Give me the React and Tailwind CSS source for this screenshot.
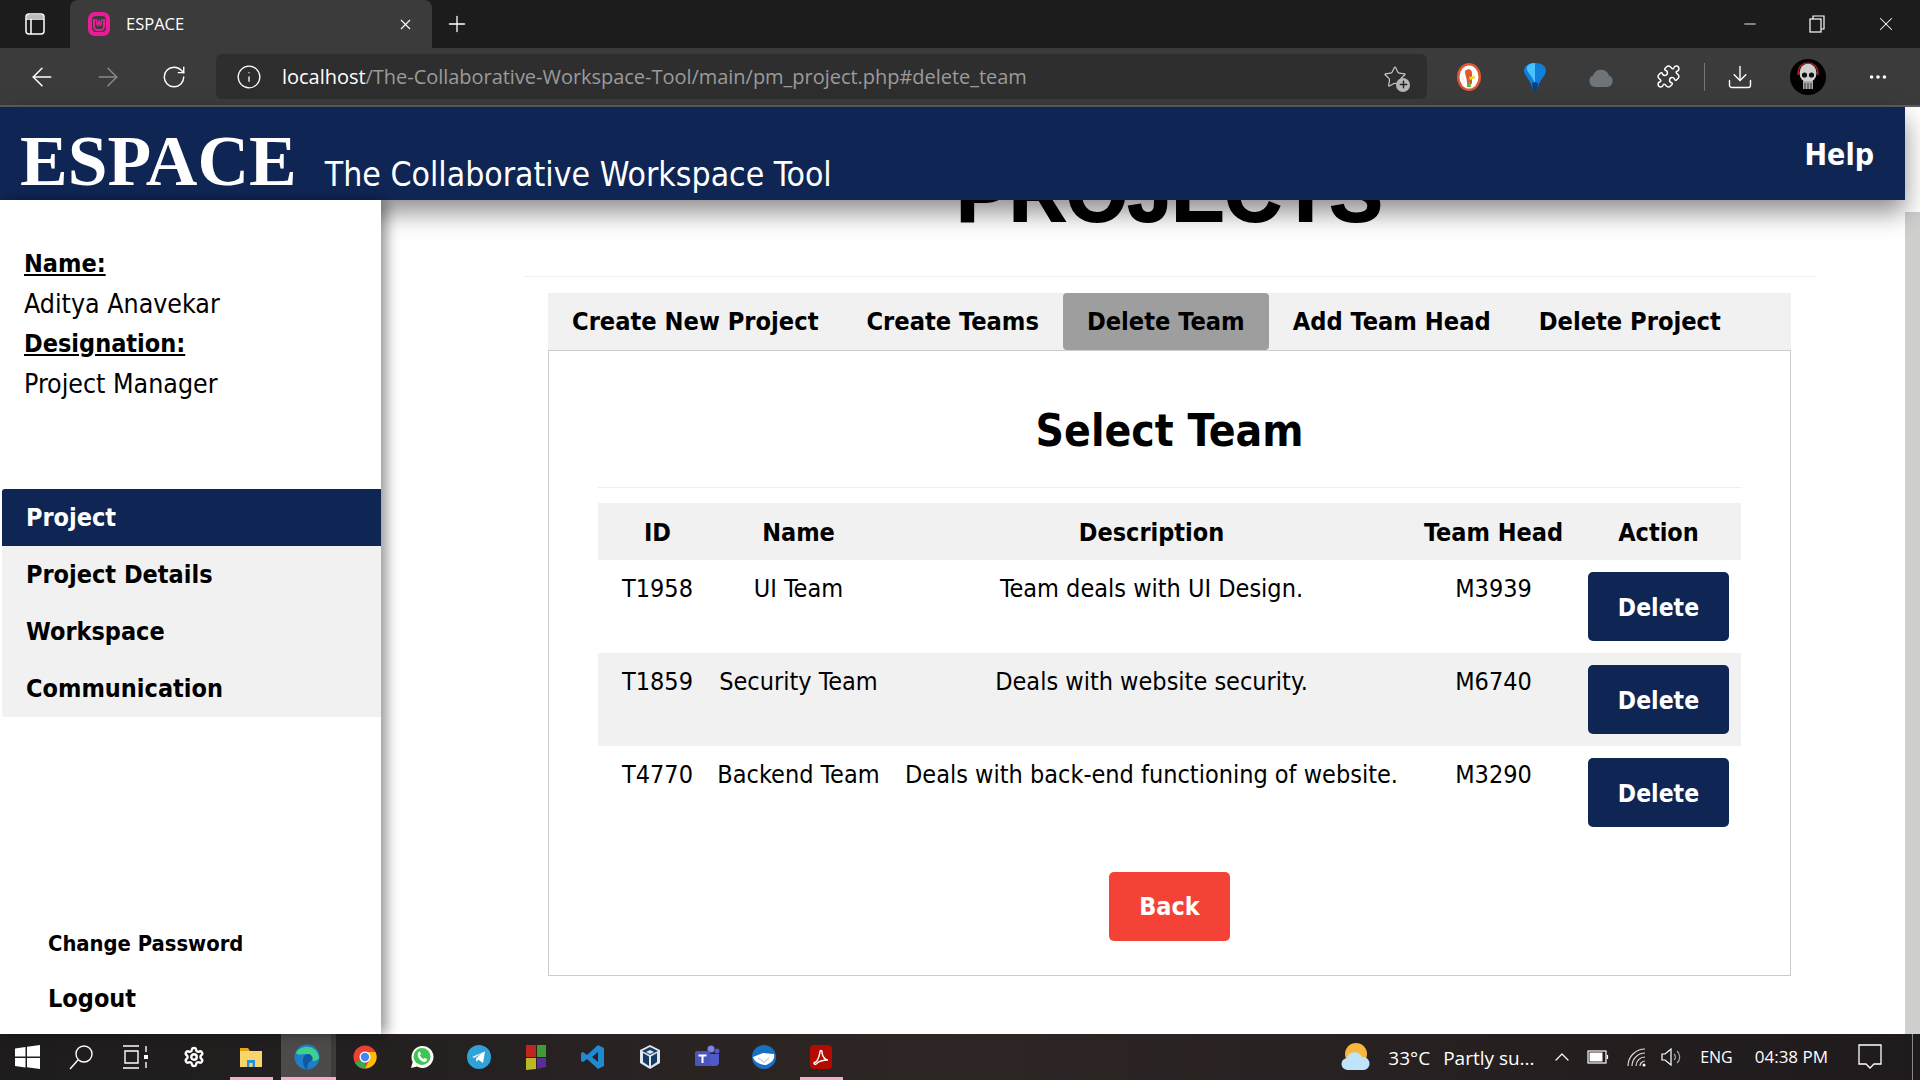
import { ArrowLeft, ArrowRight, RotateCw, Info, Star, Download, MoreHorizontal, Plus, X, Minus, Settings, ChevronUp, Puzzle } from 'lucide-react';

const font = "font-['DejaVu_Sans_Condensed','DejaVu_Sans',sans-serif]";
const uiFont = "font-['Open_Sans','Noto_Sans',sans-serif]";

const teams = [
  { id: 'T1958', name: 'UI Team', desc: 'Team deals with UI Design.', head: 'M3939' },
  { id: 'T1859', name: 'Security Team', desc: 'Deals with website security.', head: 'M6740' },
  { id: 'T4770', name: 'Backend Team', desc: 'Deals with back-end functioning of website.', head: 'M3290' },
];

const tabs = ['Create New Project', 'Create Teams', 'Delete Team', 'Add Team Head', 'Delete Project'];
const navItems = ['Project', 'Project Details', 'Workspace', 'Communication'];

// Browser chrome: tab strip
const TabBar = () => (
  <div className={`flex h-[48px] bg-[#1c1c1c] text-white ${uiFont}`}>
    <div className="flex w-[70px] items-center justify-center">
      <svg width="22" height="24" viewBox="0 0 22 24" fill="none" stroke="white" strokeWidth="1.5">
        <rect x="2" y="2" width="18" height="20" rx="3" />
        <path d="M2 7h18M7 7v15" />
        <path d="M3 3h16v4H3z" fill="#bbb" stroke="none" />
      </svg>
    </div>
    <div className="flex w-[362px] items-center rounded-t-lg bg-[#3b3b3b] pl-[17px] pr-[18px]">
      <svg width="24" height="26" viewBox="0 0 24 26">
        <rect x="1" y="1" width="22" height="24" rx="7" fill="#ec1c97" />
        <rect x="5" y="5" width="14" height="16" rx="4" fill="#3b3b3b" />
        <path d="M7 8v7c0 3 2 4 3 4h4c1 0 3-1 3-4V8" fill="none" stroke="#ec1c97" strokeWidth="2" />
        <path d="M9 8l1.500 7L12 10l1.500 5L15 8" fill="none" stroke="#ec1c97" strokeWidth="1.500" />
      </svg>
      <span className="ml-[15px] flex-1 text-[16.5px]">ESPACE</span>
      <X size={17} strokeWidth={1.5} />
    </div>
    <div className="flex w-[50px] items-center justify-center">
      <Plus size={26} strokeWidth={1.2} />
    </div>
    <div className="flex-1" />
    <div className="flex w-[68px] items-center justify-center">
      <Minus size={18} strokeWidth={1.2} />
    </div>
    <div className="flex w-[68px] items-center justify-center pr-[2px]">
      <svg width="16" height="18" viewBox="0 0 16 18" fill="none" stroke="white" strokeWidth="1.2">
        <rect x="1" y="4" width="11" height="13" />
        <path d="M4 4V1h11v13h-3" />
      </svg>
    </div>
    <div className="flex w-[68px] items-center justify-center">
      <X size={22} strokeWidth={1.1} />
    </div>
  </div>
);

// Browser chrome: address bar
const Toolbar = () => (
  <div className={`flex h-[59px] items-start border-b-2 border-[#5c5c5c] bg-[#3b3b3b] pt-[6px] text-white ${uiFont}`}>
    <div className="flex h-[45px] w-[216px] items-center pl-[26px]">
      <ArrowLeft size={30} strokeWidth={1.2} className="w-[32px]" />
      <ArrowRight size={30} strokeWidth={1.2} className="ml-[34px] w-[32px] text-[#8a8a8a]" />
      <RotateCw size={26} strokeWidth={1.3} className="ml-[37px]" />
    </div>
    <div className="flex h-[45px] w-[1211px] items-center rounded-md bg-[#2e2e2e] pl-[20px] pr-[20px]">
      <Info size={26} strokeWidth={1.2} />
      <span className="ml-[20px] flex-1 text-[20px] tracking-[-0.03px]">
        localhost<span className="text-[#9b9b9b]">/The-Collaborative-Workspace-Tool/main/pm_project.php#delete_team</span>
      </span>
      <span className="relative">
        <Star size={24} strokeWidth={1.2} className="text-[#c8c8c8]" />
        <span className="absolute -bottom-[3px] -right-[3px] flex h-[14px] w-[14px] items-center justify-center rounded-full bg-[#b5b5b5] text-[#222]">
          <Plus size={11} strokeWidth={3} />
        </span>
      </span>
    </div>
    <div className="flex h-[45px] flex-1 items-center">
      <div className="flex w-[55px] justify-end">
        <svg width="26" height="30" viewBox="0 0 26 30">
          <ellipse cx="13" cy="15" rx="12" ry="14" fill="#de5833" />
          <ellipse cx="13" cy="15" rx="9.500" ry="11.500" fill="white" />
          <path d="M9 9c3-3 7-2 7 2v10c0 2-5 2-5 0 0-5-2-7-2-12z" fill="#de5833" />
          <path d="M13 15l6-1v2l-5 2z" fill="#fdd209" />
          <path d="M11 21l3-1 1 5h-4z" fill="#4cba3c" />
        </svg>
      </div>
      <div className="flex w-[65px] justify-end">
        <svg width="24" height="30" viewBox="0 0 24 30">
          <path d="M12 1c7 0 11 3 11 8 0 5-7 8-9 20h-4C8 17 1 14 1 9c0-5 4-8 11-8z" fill="#0f7fd9" />
          <path d="M12 1c-6 0-9 3-8 7 1 3 5 5 8 14z" fill="#4cc1ff" />
          <path d="M10 29h4l1-8-3-1-3 1z" fill="#0a3f78" />
        </svg>
      </div>
      <div className="flex w-[67px] justify-end">
        <svg width="26" height="22" viewBox="0 0 26 22">
          <path d="M7 21a6 6 0 0 1-2-11.500A8.500 8.500 0 0 1 21 9.500 6 6 0 0 1 19 21z" fill="#6f7478" />
        </svg>
      </div>
      <div className="flex w-[67px] justify-end">
        <Puzzle size={25} strokeWidth={1.4} />
      </div>
      <div className="ml-[23px] h-[28px] w-px bg-[#777]" />
      <div className="flex w-[49px] justify-end">
        <Download size={28} strokeWidth={1.2} />
      </div>
      <div className="ml-[36px] flex h-[36px] w-[36px] items-center justify-center rounded-full bg-black">
        <svg width="26" height="30" viewBox="0 0 26 30">
          <ellipse cx="13" cy="11" rx="8.500" ry="9.500" fill="#cfcfcf" />
          <circle cx="9.500" cy="13" r="2.600" fill="#111" />
          <circle cx="16.500" cy="13" r="2.600" fill="#111" />
          <path d="M8 19h10v8H8z" fill="#a8a8a8" />
          <path d="M10 21v6M13 21v6M16 21v6" stroke="#333" />
          <path d="M3 13C3 4 8 1 13 1s10 3 10 12" fill="none" stroke="#a22" strokeWidth="1.500" />
        </svg>
      </div>
      <div className="ml-[41px]">
        <MoreHorizontal size={22} strokeWidth={2} />
      </div>
    </div>
  </div>
);

const Header = () => (
  <header className={`relative z-10 flex h-[93px] items-start bg-[#0f2654] text-white shadow-[0_12px_24px_rgba(0,0,0,0.45)] ${font}`}>
    <span className="ml-[20px] mt-[14px] font-['Liberation_Serif',serif] text-[71.5px] font-bold leading-[80px]">ESPACE</span>
    <span className="ml-[28px] mt-[48px] text-[33.5px] leading-[40px]">The Collaborative Workspace Tool</span>
    <span className="ml-auto mr-[31px] mt-[28px] text-[30px] font-bold leading-[40px]">Help</span>
  </header>
);

const Sidebar = () => (
  <aside className={`relative z-20 flex w-[381px] flex-col bg-white pt-[44px] text-black shadow-[6px_0_12px_rgba(0,0,0,0.4)] ${font}`}>
    <div className="pl-[24px] text-[26.5px] leading-[40px]">
      <p className="text-[25px] font-bold underline">Name:</p>
      <p>Aditya Anavekar</p>
      <p className="text-[25px] font-bold underline">Designation:</p>
      <p>Project Manager</p>
    </div>
    <nav className="ml-[2px] mt-[85px] overflow-hidden rounded-l-[3px] bg-[#f1f1f1]">
      {navItems.map((item, i) => (
        <div
          key={item}
          className={`flex h-[57px] items-center pl-[24px] text-[25px] font-bold ${i === 0 ? 'bg-[#0f2654] text-white' : ''}`}
        >
          {item}
        </div>
      ))}
    </nav>
    <div className="mt-auto pb-[15px] pl-[48px] font-bold">
      <p className="text-[21.8px] leading-[40px]">Change Password</p>
      <p className="mt-[15px] text-[25px] leading-[40px]">Logout</p>
    </div>
  </aside>
);

const TeamTable = () => (
  <table className="mt-[15px] w-full table-fixed border-collapse text-center text-[25px] leading-[33px]">
    <thead>
      <tr className="bg-[#f1f1f1] font-bold">
        <th className="w-[107px] pb-[11px] pl-[24px] pr-[12px] pt-[13px]">ID</th>
        <th className="w-[187px] px-[12px] pb-[11px] pt-[13px]">Name</th>
        <th className="px-[12px] pb-[11px] pt-[13px]">Description</th>
        <th className="w-[165px] px-[12px] pb-[11px] pt-[13px]">Team Head</th>
        <th className="w-[165px] px-[12px] pb-[11px] pt-[13px]">Action</th>
      </tr>
    </thead>
    <tbody>
      {teams.map((t, i) => (
        <tr key={t.id} className={i === 1 ? 'bg-[#f1f1f1]' : ''}>
          <td className="py-[12px] pl-[24px] pr-[12px] align-top">{t.id}</td>
          <td className="p-[12px] align-top">{t.name}</td>
          <td className="p-[12px] align-top">{t.desc}</td>
          <td className="p-[12px] align-top">{t.head}</td>
          <td className="p-[12px] align-top">
            <button className="h-[69px] w-[141px] rounded-[5px] bg-[#0f2654] pt-[1px] text-[24.5px] font-bold text-white">Delete</button>
          </td>
        </tr>
      ))}
    </tbody>
  </table>
);

const Main = () => (
  <main className={`min-w-0 flex-1 overflow-hidden bg-white text-black ${font}`}>
    <div className="ml-[143px] w-[1291px]">
      <div className="flex h-[76px] items-end justify-center">
        <h1 className="mb-[43px] font-['Liberation_Sans',sans-serif] text-[79px] font-bold leading-none [-webkit-text-stroke:2px_black]">PROJECTS</h1>
      </div>
      <hr className="border-[#eeeeee]" />
      <div className="mx-[24px] mt-[16px]">
        <div className="flex h-[57px] bg-[#f1f1f1] text-[25.2px] font-bold">
          {tabs.map((tab) => (
            <div key={tab} className={`flex items-center px-[24px] ${tab === 'Delete Team' ? 'rounded-[4px] bg-[#9e9e9e]' : ''}`}>
              {tab}
            </div>
          ))}
        </div>
        <div className="h-[626px] border border-[#cccccc] px-[49px]">
          <h2 className="flex h-[136px] items-center justify-center pt-[23px] text-[44px] font-bold">Select Team</h2>
          <hr className="border-[#eeeeee]" />
          <TeamTable />
          <div className="mt-[33px] flex justify-center">
            <button className="h-[69px] w-[121px] rounded-[5px] bg-[#f44336] text-[25px] font-bold text-white">Back</button>
          </div>
        </div>
      </div>
    </div>
  </main>
);

// Windows taskbar icons
const taskIcons = [
  <svg key="chrome" width="24" height="24" viewBox="0 0 24 24">
    <circle cx="12" cy="12" r="11.500" fill="#ea4335" />
    <path d="M12 12L2 18a11.500 11.500 0 0 0 10 5.500z" fill="#34a853" />
    <path d="M12 7h10.500a11.500 11.500 0 0 1-10.500 16.500L17 14z" fill="#fbbc05" />
    <circle cx="12" cy="12" r="5.500" fill="white" />
    <circle cx="12" cy="12" r="4.200" fill="#4285f4" />
  </svg>,
  <svg key="whatsapp" width="24" height="24" viewBox="0 0 24 24">
    <path d="M1 23l1.700-6A11 11 0 1 1 7 21.500z" fill="white" />
    <circle cx="12" cy="11.500" r="8.500" fill="#3fc456" />
    <path d="M8.500 7c1-1 1.500-.5 2 1l.5 1-1 1.500c.8 1.500 2 2.700 3.500 3.500l1.500-1 2 1c.5 1.500-1 3-2.500 3C10.500 17 6 11 8.500 7z" fill="white" />
  </svg>,
  <svg key="telegram" width="24" height="24" viewBox="0 0 24 24">
    <circle cx="12" cy="12" r="12" fill="#2fa3d9" />
    <path d="M5 12l13-5.500-2 11.500-4.500-3.200-2 2-.5-3.500 6-5.300-7.500 4.800z" fill="white" />
  </svg>,
  <svg key="tiles" width="24" height="26" viewBox="0 0 24 26">
    <path d="M2 1h10v12H2z" fill="#c0261f" />
    <path d="M13 1h9v12h-9z" fill="#3f9c35" />
    <path d="M2 14h10v11l-10 1z" fill="#b9b827" />
    <path d="M13 14h9v9l-9 2z" fill="#5b2a9b" />
  </svg>,
  <svg key="vscode" width="24" height="26" viewBox="0 0 24 26">
    <path d="M17 1l6 3v18l-6 3L6 15l-4 3-2-1v-8l2-1 4 3zM17 8l-6 5 6 5z" fill="#1f8ad2" />
  </svg>,
  <svg key="box" width="22" height="26" viewBox="0 0 22 26">
    <path d="M11 1l10 5v13l-10 6-10-6V6z" fill="#dfe6f0" />
    <path d="M11 3l8 4-8 4-8-4zM4 9l6 3.500V22l-6-4zM18 9l-6 3.500V22l6-4z" fill="#173a63" />
    <path d="M11 6l4 2-4 2-4-2z" fill="#dfe6f0" />
  </svg>,
  <svg key="teams" width="26" height="26" viewBox="0 0 26 26">
    <circle cx="17" cy="5" r="3.500" fill="#7b83eb" />
    <circle cx="23" cy="7" r="2.500" fill="#5059c9" />
    <path d="M14 10h11v8a4 4 0 0 1-4 4h-3a4 4 0 0 1-4-4z" fill="#5059c9" />
    <rect x="1" y="7" width="15" height="15" rx="1.500" fill="#4b53bc" />
    <path d="M4.500 10.500h8v2h-3V19h-2v-6.500h-3z" fill="white" />
  </svg>,
  <svg key="thunderbird" width="24" height="26" viewBox="0 0 24 26">
    <circle cx="12" cy="13" r="12" fill="#1b6fc2" />
    <path d="M1 13l10-4 11 1c1 5-2 9-8 11-5 0-12-3-13-8z" fill="white" />
    <path d="M6 14l6 4 5-4" fill="none" stroke="#c9d4e6" strokeWidth="1.500" />
  </svg>,
  <svg key="acrobat" width="22" height="24" viewBox="0 0 22 24">
    <rect x="0" y="0" width="22" height="24" rx="4" fill="#b30b00" />
    <path d="M4 18c3-1 5-5 6-11 0-2 2-2 2 0 0 4 3 8 6 8-4 0-9 1-12 4-1 1-2 0-2-1z" fill="none" stroke="white" strokeWidth="1.500" />
  </svg>,
];

const Taskbar = () => (
  <div className={`flex h-[46px] items-center bg-gradient-to-r from-[#1e1c1d] via-[#2e2625] to-[#1f1a1c] text-white ${uiFont}`}>
    <div className="flex w-[54px] justify-center">
      <svg width="25" height="24" viewBox="0 0 25 24" fill="white">
        <path d="M0 3.500l10.500-1.500v9.500H0zM12 1.800L25 0v11.500H12zM0 13h10.500v9.500L0 21zM12 13h13v11l-13-1.800z" />
      </svg>
    </div>
    <div className="flex w-[54px] justify-center">
      <svg width="24" height="25" viewBox="0 0 24 25" fill="none" stroke="white" strokeWidth="1.400">
        <circle cx="15" cy="9" r="8" />
        <path d="M9 15L1 24" />
      </svg>
    </div>
    <div className="flex w-[54px] justify-center">
      <svg width="26" height="24" viewBox="0 0 26 24" fill="none" stroke="white" strokeWidth="1.400">
        <path d="M1 1h16M1 23h16M3 6h13v12H3zM24 1v6M24 17v6" />
        <rect x="22" y="10" width="4" height="4" fill="white" stroke="none" />
      </svg>
    </div>
    <div className="flex w-[64px] justify-center">
      <Settings size={22} strokeWidth={2.6} />
    </div>
    <div className="relative flex h-full w-[50px] items-center justify-center">
      <svg width="24" height="24" viewBox="0 0 24 24">
        <path d="M1 3h8l2 3H1z" fill="#e8a416" />
        <path d="M1 6h22v16H1z" fill="#f7d56a" />
        <path d="M8 22v-7h8v7h-2.500v-4h-3v4z" fill="#2a8ee0" />
      </svg>
      <span className="absolute bottom-0 left-[4px] h-[3px] w-[43px] bg-[#f4adc6]" />
    </div>
    <div className="relative ml-[5px] flex h-full w-[55px]">
      <div className="flex w-[50px] items-center justify-center bg-[#4d4a49] pl-[1px]">
        <svg width="26" height="26" viewBox="0 0 26 26">
          <circle cx="13" cy="13" r="12.500" fill="#1e7fc8" />
          <path d="M2 9C5 1 22-1 25 13c0 3-3 4-7 4 2-2 1-7-5-7-5 0-9 2-11-1z" fill="#3fcf8e" />
          <path d="M9 16c0-4 3-6 6-6 3 1 4 5 2 7-2 1-5 4-3 8-4 0-5-5-5-9z" fill="#0c59a4" />
        </svg>
      </div>
      <div className="w-[5px] bg-[#3e3b3a]" />
      <span className="absolute bottom-0 left-0 h-[3px] w-full bg-[#f4adc6]" />
    </div>
    {taskIcons.map((icon, i) => (
      <div key={i} className="relative flex h-full w-[57px] items-center justify-center">
        {icon}
        {i === 8 && <span className="absolute bottom-0 left-[8px] h-[3px] w-[43px] bg-[#f4adc6]" />}
      </div>
    ))}
    <div className="flex-1" />
    <svg width="30" height="30" viewBox="0 0 30 30">
      <circle cx="15" cy="12" r="11" fill="#f6b73c" />
      <path d="M7 28a6 6 0 0 1-1-12 8 8 0 0 1 15-1 6.500 6.500 0 0 1 2 13z" fill="#bfe3f7" />
    </svg>
    <span className="ml-[17px] mt-[3px] text-[19px]">33°C</span>
    <span className="ml-[13px] mt-[3px] w-[93px] whitespace-nowrap text-[19px]">Partly su...</span>
    <ChevronUp size={24} strokeWidth={1.2} className="ml-[14px]" />
    <svg className="ml-[13px]" width="22" height="14" viewBox="0 0 22 14" fill="none" stroke="white" strokeWidth="1.200">
      <rect x="1" y="1" width="18" height="12" />
      <rect x="2.500" y="2.500" width="13" height="9" fill="white" stroke="none" />
      <path d="M20.500 5v4" />
    </svg>
    <svg className="ml-[18px]" width="19" height="19" viewBox="0 0 19 19" fill="none" stroke="#ddd" strokeWidth="1.200">
      <path d="M1 18A17 17 0 0 1 18 1M5 18A13 13 0 0 1 18 5M9 18a9 9 0 0 1 9-9M13 18a5 5 0 0 1 5-5" />
      <circle cx="17" cy="17" r="1.500" fill="white" stroke="none" />
    </svg>
    <svg className="ml-[15px]" width="22" height="20" viewBox="0 0 22 20" fill="none" stroke="white" strokeWidth="1.200">
      <path d="M1 7v6h3l6 5V2L4 7z" />
      <path d="M13 7a4 4 0 0 1 0 6M16 4a8 8 0 0 1 0 12" stroke="#aaa" />
    </svg>
    <span className="ml-[17px] text-[16px]">ENG</span>
    <span className="ml-[22px] text-[17px]">04:38 PM</span>
    <svg className="ml-[30px]" width="24" height="26" viewBox="0 0 24 26" fill="none" stroke="white" strokeWidth="1.300">
      <path d="M1 1h22v19h-7l-4 4-4-4H1z" />
    </svg>
    <div className="ml-[30px] mr-[7px] h-full w-px bg-[#888]" />
  </div>
);

const App = () => {
  return (
    <div className="flex h-screen flex-col overflow-hidden bg-white">
      <TabBar />
      <Toolbar />
      <div className="flex min-h-0 flex-1">
        <div className="flex min-w-0 flex-1 flex-col">
          <Header />
          <div className="flex min-h-0 flex-1">
            <Sidebar />
            <Main />
          </div>
        </div>
        {/* Page scrollbar */}
        <div className="flex w-[15px] flex-col bg-white pt-[105px]">
          <div className="flex-1 bg-[#cfcfcd]" />
        </div>
      </div>
      <Taskbar />
    </div>
  );
};

export default App;
